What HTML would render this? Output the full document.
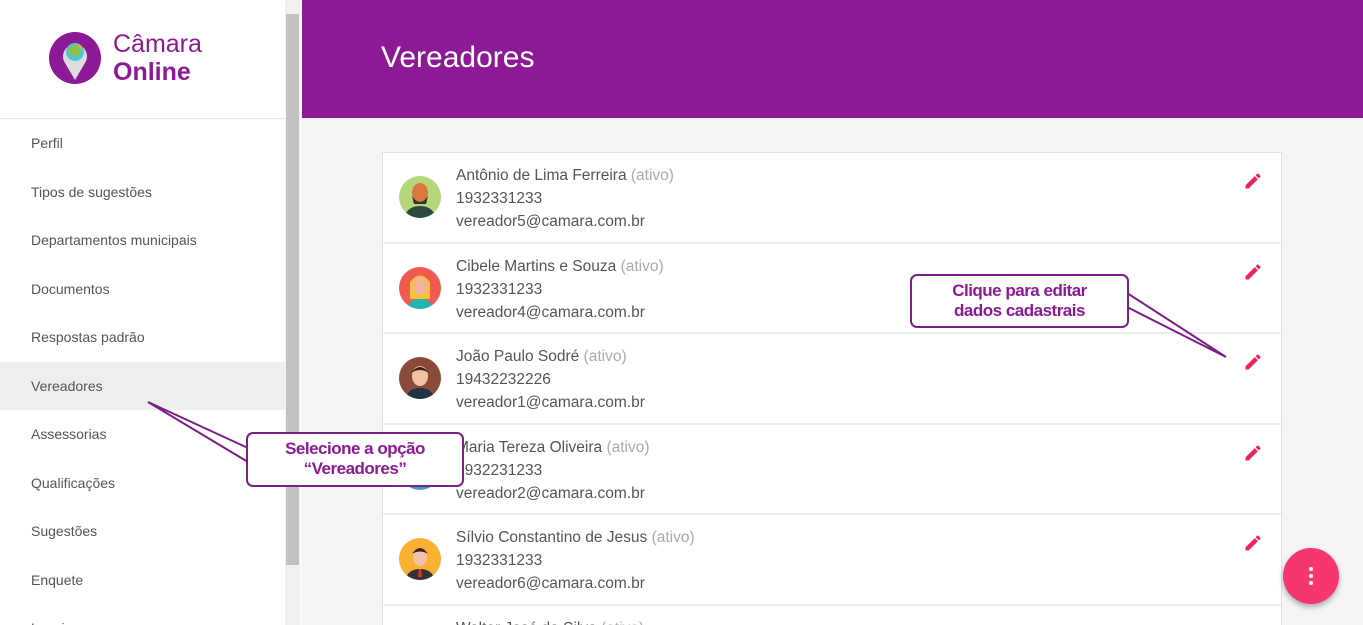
<!DOCTYPE html>
<html style="width:1363px;height:625px;overflow:hidden"><head><meta charset="utf-8"><style>
*{margin:0;padding:0;box-sizing:border-box}
body{width:1363px;height:625px;overflow:hidden;font-family:"Liberation Sans",sans-serif;background:#f5f5f5;position:relative}
#wrap{position:absolute;left:0;top:0;width:1363px;height:625px;overflow:hidden}
.side{position:absolute;left:0;top:0;width:285px;height:625px;background:#fff;overflow:hidden}
.logo{height:119px;border-bottom:1px solid #e6e6e6;position:relative}
.nav div{height:48.5px;line-height:48.5px;padding-left:31px;font-size:14px;color:#555}
.nav .act{background:#eee}
.sb{position:absolute;left:285px;top:0;width:15px;height:625px;background:#f1f1f1}
.sb i{position:absolute;left:1px;top:14px;width:13px;height:551px;background:#c1c1c1}
.hdr{position:absolute;left:302px;top:0;right:0;height:118px;background:#8b1a94;color:#fff;font-size:30px;padding:41px 0 0 79px}
.gap{position:absolute;left:300px;top:0;width:2px;height:625px;background:#fafafa}
.card{position:absolute;left:382px;top:152px;width:900px;height:473px;overflow:hidden;background:#fff;border:1px solid #e2e2e2;border-bottom:0}
.row{height:90.5px;border-bottom:2px solid #ececec;position:relative}
.av{position:absolute;left:16px;top:23px;width:42px;height:42px;border-radius:50%;overflow:hidden}
.tx{position:absolute;left:73px;top:11px;font-size:15.5px;color:#555;line-height:23px;white-space:nowrap}
.tx span{color:#aaa}
.ed{position:absolute;right:18px;top:18px}
.call{position:absolute;background:#fff;border:2px solid #7b1f86;border-radius:7px;color:#8b1a94;font-size:17px;text-align:center;line-height:20px;padding-top:5px;font-weight:bold;letter-spacing:-.5px}
.fab{position:absolute;left:1283px;top:548px;width:56px;height:56px;border-radius:50%;background:#f5366f;box-shadow:0 3px 6px rgba(0,0,0,.3)}
</style></head><body><div id="wrap">
<div class="side">
<div class="logo">
<svg style="position:absolute;left:49px;top:30px" width="54" height="57"><circle cx="26" cy="28" r="26" fill="#8b1a94"/><path d="M26 50 L16 33 A12 12 0 1 1 36 33 Z" fill="#ddd"/><circle cx="26" cy="22" r="9" fill="#49c6e5"/><path d="M19 18 L27 14 L33 20 L28 27 L20 25Z" fill="#8bc34a"/><path d="M27 14 L33 16 L33 20Z" fill="#f5a623"/></svg>
<div style="position:absolute;left:113px;top:30px;color:#8b1a94;font-size:25px;line-height:28px">Câmara<br><b>Online</b></div>
</div>
<div class="nav">
<div>Perfil</div><div>Tipos de sugestões</div><div>Departamentos municipais</div><div>Documentos</div><div>Respostas padrão</div><div class="act">Vereadores</div><div>Assessorias</div><div>Qualificações</div><div>Sugestões</div><div>Enquete</div><div>Locais</div>
</div></div>
<div class="sb"><i></i></div>
<div class="gap"></div>
<div class="hdr">Vereadores</div>
<div class="card">
<div class="row"><div class="av" style="background:#b5d67a"><svg width="42" height="42"><ellipse cx="21" cy="17" rx="8" ry="10" fill="#d9773f"/><path d="M13 20 Q21 32 29 20 L27 28 L15 28Z" fill="#333"/><path d="M5 42 Q8 30 21 30 Q34 30 37 42Z" fill="#2c4a3e"/></svg></div><div class="tx">Antônio de Lima Ferreira <span>(ativo)</span><br>1932331233<br>vereador5@camara.com.br</div><svg class="ed" width="20" height="20" viewBox="0 0 24 24"><path fill="#f0205f" d="M3 17.25V21h3.75L17.81 9.94l-3.75-3.75L3 17.25zM20.71 7.04a1 1 0 000-1.41l-2.34-2.34a1 1 0 00-1.41 0l-1.83 1.83 3.75 3.75 1.83-1.83z"/></svg></div>
<div class="row"><div class="av" style="background:#f05a50"><svg width="42" height="42"><path d="M11 32 L11 15 Q21 2 31 15 L31 32Z" fill="#f5c33b"/><ellipse cx="21" cy="19" rx="7" ry="9" fill="#f5b49a"/><path d="M8 42 Q10 32 21 32 Q32 32 34 42Z" fill="#1fb5b0"/></svg></div><div class="tx">Cibele Martins e Souza <span>(ativo)</span><br>1932331233<br>vereador4@camara.com.br</div><svg class="ed" width="20" height="20" viewBox="0 0 24 24"><path fill="#f0205f" d="M3 17.25V21h3.75L17.81 9.94l-3.75-3.75L3 17.25zM20.71 7.04a1 1 0 000-1.41l-2.34-2.34a1 1 0 00-1.41 0l-1.83 1.83 3.75 3.75 1.83-1.83z"/></svg></div>
<div class="row"><div class="av" style="background:#8a4a3a"><svg width="42" height="42"><ellipse cx="21" cy="19" rx="8" ry="10" fill="#f3c1a0"/><path d="M12 16 Q21 4 30 16 Q21 10 12 16Z" fill="#3b2218"/><path d="M6 42 Q9 31 21 31 Q33 31 36 42Z" fill="#234"/></svg></div><div class="tx">João Paulo Sodré <span>(ativo)</span><br>19432232226<br>vereador1@camara.com.br</div><svg class="ed" width="20" height="20" viewBox="0 0 24 24"><path fill="#f0205f" d="M3 17.25V21h3.75L17.81 9.94l-3.75-3.75L3 17.25zM20.71 7.04a1 1 0 000-1.41l-2.34-2.34a1 1 0 00-1.41 0l-1.83 1.83 3.75 3.75 1.83-1.83z"/></svg></div>
<div class="row"><div class="av" style="background:#3a9fc0"></div><div class="tx">Maria Tereza Oliveira <span>(ativo)</span><br>1932231233<br>vereador2@camara.com.br</div><svg class="ed" width="20" height="20" viewBox="0 0 24 24"><path fill="#f0205f" d="M3 17.25V21h3.75L17.81 9.94l-3.75-3.75L3 17.25zM20.71 7.04a1 1 0 000-1.41l-2.34-2.34a1 1 0 00-1.41 0l-1.83 1.83 3.75 3.75 1.83-1.83z"/></svg></div>
<div class="row"><div class="av" style="background:#f8b133"><svg width="42" height="42"><ellipse cx="21" cy="19" rx="7" ry="9" fill="#f5c0a8"/><path d="M13 16 Q21 4 29 16 Q21 11 13 16Z" fill="#3b2218"/><path d="M6 42 Q9 31 21 31 Q33 31 36 42Z" fill="#333"/><path d="M20 31h2l1 8h-4z" fill="#d32"/></svg></div><div class="tx">Sílvio Constantino de Jesus <span>(ativo)</span><br>1932331233<br>vereador6@camara.com.br</div><svg class="ed" width="20" height="20" viewBox="0 0 24 24"><path fill="#f0205f" d="M3 17.25V21h3.75L17.81 9.94l-3.75-3.75L3 17.25zM20.71 7.04a1 1 0 000-1.41l-2.34-2.34a1 1 0 00-1.41 0l-1.83 1.83 3.75 3.75 1.83-1.83z"/></svg></div>
<div class="row" style="height:30px;border:0"><div class="tx">Walter José da Silva <span>(ativo)</span></div></div>
</div>
<svg style="position:absolute;left:0;top:0" width="1363" height="625"><path d="M148 402 L248 448 M148 402 L248 462" fill="none" stroke="#7b1f86" stroke-width="2"/><path d="M1127 293 L1226 357 L1127 307" fill="none" stroke="#7b1f86" stroke-width="2"/></svg>
<div class="call" style="left:246px;top:432px;width:218px;height:55px">Selecione a opção<br>“Vereadores”</div>
<div class="call" style="left:910px;top:274px;width:219px;height:54px">Clique para editar<br>dados cadastrais</div>
<div class="fab"><svg width="56" height="56"><circle cx="28" cy="21" r="2" fill="#fff"/><circle cx="28" cy="28" r="2" fill="#fff"/><circle cx="28" cy="35" r="2" fill="#fff"/></svg></div>
</div></body></html>
